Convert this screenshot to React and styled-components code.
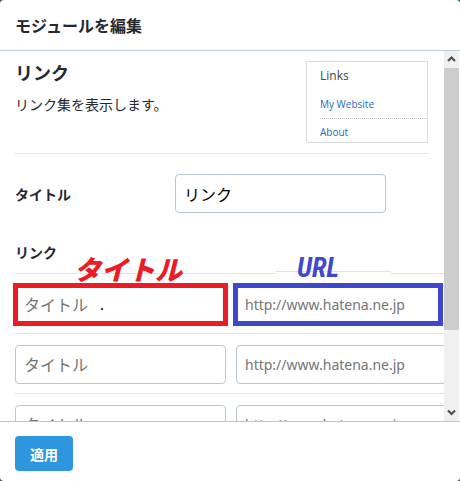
import React from 'react'
import styled, { createGlobalStyle } from 'styled-components';

const LINK_ROWS = [1, 2, 3];

function App() {
  return (
    <>
      <GlobalStyle />
      <Dialog role='dialog' aria-labelledby='dialog-title'>
        <DialogHeader>
          <h1 id='dialog-title'>モジュールを編集</h1>
        </DialogHeader>

        <DialogBody>
          <Content>
            <Intro>
              <div>
                <h2>リンク</h2>
                <p>リンク集を表示します。</p>
              </div>
              <Preview>
                <PreviewTitle>Links</PreviewTitle>
                <PreviewLink href='#website'>My Website</PreviewLink>
                <PreviewLink href='#about'>About</PreviewLink>
              </Preview>
            </Intro>

            <TitleField>
              <label htmlFor='module-title'>タイトル</label>
              <TextInput id='module-title' type='text' defaultValue='リンク' />
            </TitleField>

            <LinksHeading>リンク</LinksHeading>
            <LinkList>
              {LINK_ROWS.map((row, index) => (
                <LinkRow key={row}>
                  <Cell>
                    <TextInput type='text' placeholder='タイトル' aria-label={`タイトル ${row}`} />
                    {index === 0 && (
                      <>
                        <Marker $color='#ed1c24' />
                        <TitleNote>タイトル</TitleNote>
                        <Dot>.</Dot>
                      </>
                    )}
                  </Cell>
                  <Cell>
                    <TextInput $latin type='text' placeholder='http://www.hatena.ne.jp' aria-label={`URL ${row}`} />
                    {index === 0 && (
                      <>
                        <Marker $color='#3f48cc' $cut />
                        <UrlNote>URL</UrlNote>
                      </>
                    )}
                  </Cell>
                </LinkRow>
              ))}
            </LinkList>
          </Content>

          <Scrollbar aria-hidden='true'>
            <Arrow d='M2 7 L5.5 3.5 L9 7' />
            <Track><Thumb /></Track>
            <Arrow d='M2 3.5 L5.5 7 L9 3.5' />
          </Scrollbar>
        </DialogBody>

        <DialogFooter>
          <ApplyButton type='button'>適用</ApplyButton>
        </DialogFooter>
      </Dialog>
    </>
  )
}

function Arrow({ d }) {
  return (
    <ArrowBox>
      <svg width='11' height='11' viewBox='0 0 11 11'>
        <path d={d} fill='none' stroke='#505050' strokeWidth='2.2' />
      </svg>
    </ArrowBox>
  )
}

export default App

const GlobalStyle = createGlobalStyle`
    * {
        box-sizing: border-box;
        margin: 0;
        padding: 0;
    }
    body {
        background-color: #2f5552;
        color: #25292f;
        font-family: "Noto Sans CJK JP", sans-serif;
        font-size: 14px;
    }
`;

const Dialog = styled.div`
    height: 100vh;
    display: flex;
    flex-direction: column;
    background-color: white;
    border-radius: 4px;
    overflow: hidden;
`;

const DialogHeader = styled.header`
    padding: 13px 15px;
    border-bottom: 1px solid #b7cbd0;

    h1 {
        font-size: 16px;
        line-height: 24px;
    }
`;

const DialogBody = styled.div`
    flex: 1;
    min-height: 0;
    display: flex;
    padding-right: 1px;
`;

const Content = styled.div`
    flex: 1;
    min-width: 0;
    padding: 10px 0 0 15px;
    overflow: hidden;
`;

const Intro = styled.section`
    display: flex;
    justify-content: space-between;
    margin-right: 16px;
    padding-bottom: 10px;
    border-bottom: 1px solid #dfe3e5;

    h2 {
        font-size: 18px;
        line-height: 22px;
    }
    p {
        margin-top: 10px;
        line-height: 22px;
    }
`;

const Preview = styled.div`
    width: 122px;
    height: 82px;
    padding-left: 13px;
    border: 1px solid #d9dcdd;
    font-family: "Open Sans", sans-serif;
`;

const PreviewTitle = styled.div`
    padding: 6px 0 7px;
    color: #444;
    font-size: 12px;
    line-height: 16px;
`;

const PreviewLink = styled.a`
    display: block;
    height: 27px;
    color: #1a6cc0;
    font-size: 10px;
    line-height: 26px;
    text-decoration: none;

    & + & {
        border-top: 1px dotted #c4c4c4;
    }
`;

const TextInput = styled.input`
    display: block;
    width: 211px;
    height: 39px;
    padding: 0 8px;
    background-color: white;
    border: 1px solid #b7c9ce;
    border-radius: 4px;
    color: #000;
    font-family: "Noto Sans", "Noto Sans CJK JP", sans-serif;
    font-size: ${({ $latin }) => ($latin ? '14px' : '16px')};

    &::placeholder {
        color: #757575;
    }
`;

const TitleField = styled.div`
    display: flex;
    align-items: center;
    padding: 20px 0;

    label {
        width: 160px;
        font-weight: bold;
    }
`;

const LinksHeading = styled.h3`
    padding: 8px 0 10px;
    font-size: 14px;
    line-height: 22px;
`;

const LinkList = styled.div`
    border-top: 1px solid #dfe3e5;
`;

const LinkRow = styled.div`
    display: flex;
    gap: 10px;
    padding: 11px 0 9px;
    border-bottom: 1px solid #dfe3e5;
`;

const Cell = styled.div`
    position: relative;
    flex: none;
`;

// hand drawn box round an input
const Marker = styled.div`
    position: absolute;
    top: -2px;
    bottom: -2px;
    left: ${({ $cut }) => ($cut ? '-3px' : '-2px')};
    right: ${({ $cut }) => ($cut ? '4px' : '-2px')};
    border: 5px solid ${({ $color }) => $color};
    pointer-events: none;
`;

const TitleNote = styled.span`
    position: absolute;
    left: 59px;
    top: -34px;
    color: #ed1c24;
    font-size: 27px;
    font-style: italic;
    font-weight: 900;
    line-height: 36px;
    white-space: nowrap;
`;

const Dot = styled.span`
    position: absolute;
    left: 85px;
    top: 8px;
    color: #000;
    font-size: 14px;
    line-height: 22px;
`;

const UrlNote = styled.span`
    position: absolute;
    left: 40px;
    top: -30px;
    width: 115px;
    height: 20px;
    padding-left: 21px;
    background: linear-gradient(#dfe3e5, #dfe3e5) 0 16px / 100% 1px no-repeat white;
    color: #3f48cc;
    font-family: "Roboto Condensed", Roboto, sans-serif;
    font-size: 27px;
    font-style: italic;
    font-weight: bold;
    line-height: 26px;
`;

const Scrollbar = styled.div`
    width: 15px;
    display: flex;
    flex-direction: column;
    background-color: #f0f0f0;
`;

const ArrowBox = styled.div`
    height: 17px;
    display: flex;
    align-items: center;
    justify-content: center;
`;

const Track = styled.div`
    flex: 1;
`;

const Thumb = styled.div`
    height: 78%;
    background-color: #cdcdcd;
`;

const DialogFooter = styled.footer`
    padding: 14px 15px 10px;
    border-top: 1px solid #b7c9ce;
`;

const ApplyButton = styled.button`
    height: 35px;
    padding: 0 15px;
    background-color: #2d96df;
    border: none;
    border-radius: 4px;
    color: white;
    font-family: inherit;
    font-size: 14px;
    font-weight: bold;
`;
